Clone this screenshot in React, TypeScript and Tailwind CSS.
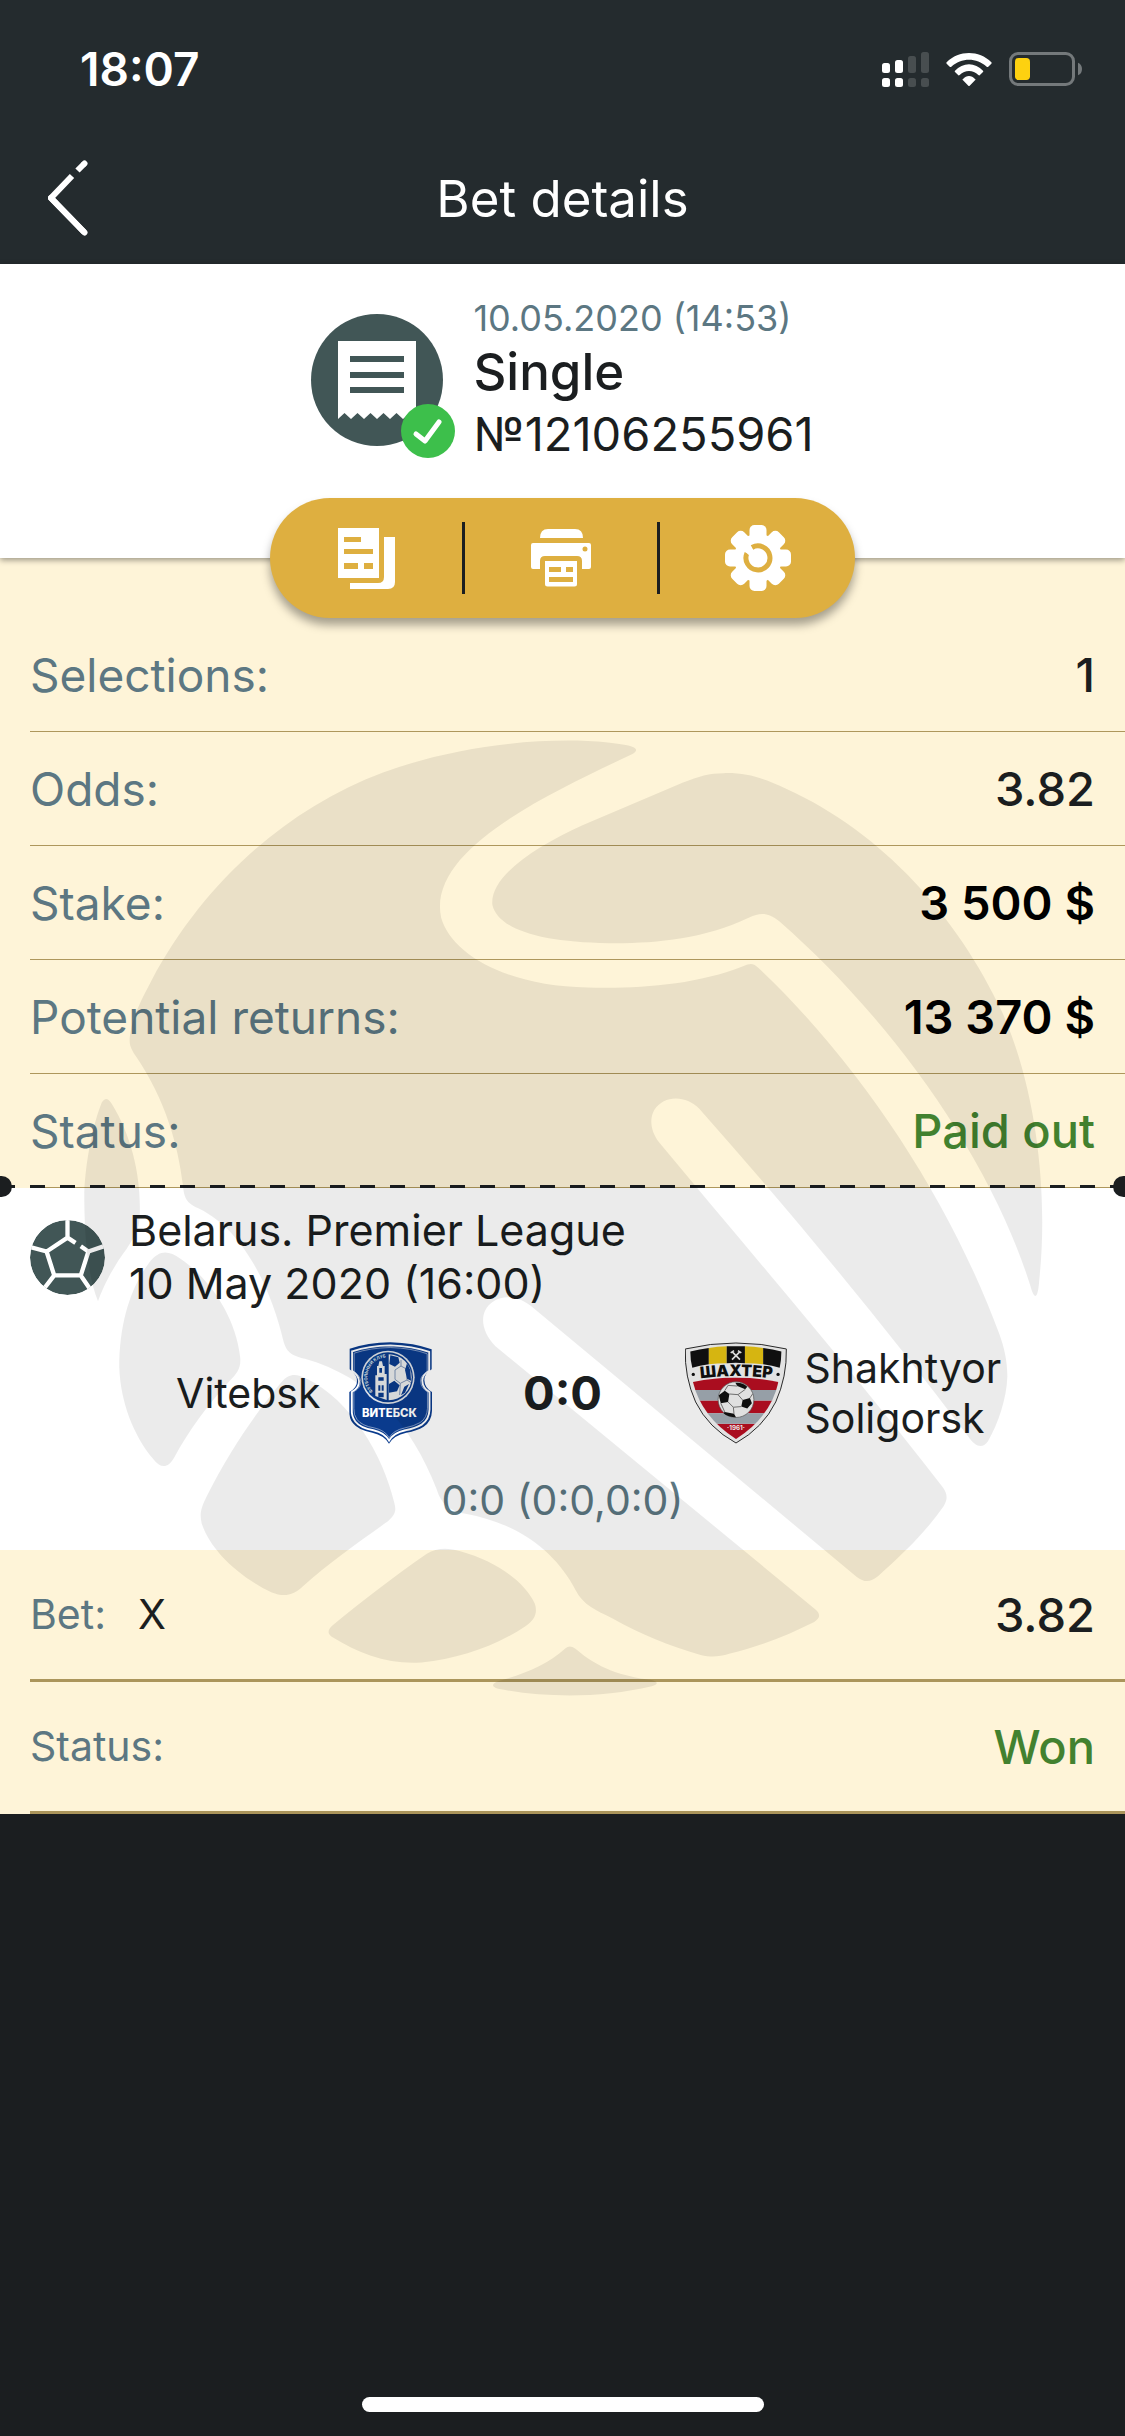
import type { ReactNode } from "react";
import clsx from "clsx";

type Row = {
  label: string;
  value: string;
  valueClass?: string;
};

const summary: Row[] = [
  { label: "Selections:", value: "1", valueClass: "font-medium text-[#1b1e20]" },
  { label: "Odds:", value: "3.82", valueClass: "font-medium text-[#1b1e20]" },
  { label: "Stake:", value: "3 500 $", valueClass: "font-semibold text-black" },
  { label: "Potential returns:", value: "13 370 $", valueClass: "font-semibold text-black" },
  { label: "Status:", value: "Paid out", valueClass: "font-medium text-[#42812f]" },
];

function SignalIcon() {
  return (
    <svg viewBox="0 0 47 35" className="h-[35px] w-[47px]" aria-hidden="true">
      <g fill="#fff">
        <rect x="0" y="11" width="8" height="10" rx="2.5" />
        <rect x="13" y="8" width="8" height="13" rx="2.5" />
        <rect x="0" y="26" width="8" height="9" rx="2.5" />
        <rect x="13" y="26" width="8" height="9" rx="2.5" />
      </g>
      <g fill="#484e50">
        <rect x="26" y="4" width="8" height="17" rx="2.5" />
        <rect x="39" y="0" width="8" height="21" rx="2.5" />
        <rect x="26" y="26" width="8" height="9" rx="2.5" />
        <rect x="39" y="26" width="8" height="9" rx="2.5" />
      </g>
    </svg>
  );
}

function WifiIcon() {
  return (
    <svg viewBox="319 96 136 99" className="h-[33px] w-[46px]" fill="#fff" aria-hidden="true">
      <path d="M320 124C357 87 417 87 454 124Q456 126 454 128L444 138Q442 139 440 137C410 109 364 109 334 137Q332 139 330 138L320 128Q318 126 320 124Z" />
      <path d="M345 149C368 123 406 123 429 149Q431 151 429 153L419 163Q417 164 415 162C399 146 375 146 359 162Q357 164 355 163L345 153Q343 151 345 149Z" />
      <path d="M369 174C379 162 395 162 405 174Q408 176 405 178L389 194Q387 196 385 194L369 178Q366 176 369 174Z" />
    </svg>
  );
}

function BatteryIcon() {
  return (
    <svg viewBox="507 96 219 102" className="h-[34px] w-[73px]" aria-hidden="true">
      <rect x="511.500" y="100.500" width="189" height="93" rx="23" fill="none" stroke="#74797b" strokeWidth="9" />
      <rect x="525" y="114" width="45" height="66" rx="11" fill="#fdd110" />
      <path d="M714 128Q726 133 726 147Q726 161 714 166Z" fill="#74797b" />
    </svg>
  );
}

function ReceiptIcon() {
  return (
    <svg viewBox="0 0 132 132" className="size-[132px]" aria-hidden="true">
      <circle cx="66" cy="66" r="66" fill="#415656" />
      <path
        d="M27 27H105V105L98.500 99L92 105L85.500 99L79 105L72.500 99L66 105L59.500 99L53 105L46.500 99L40 105L33.500 99L27 105Z"
        fill="#fff"
      />
      <path d="M39 45H93M39 61H93M39 76H93" stroke="#415656" strokeWidth="6" />
    </svg>
  );
}

function CopyIcon() {
  return (
    <svg viewBox="0 0 57 61" className="h-[61px] w-[57px]" aria-hidden="true">
      <path
        fill="#fff"
        fillRule="evenodd"
        d="M0 0H41V50H0ZM6 9V14H23V9ZM6 21V26H35V21ZM6 35V41H20V35ZM26 35V41H35V35Z"
      />
      <path fill="#fff" d="M46 9H57V54Q57 61 50 61H12V55H40Q46 55 46 49Z" />
    </svg>
  );
}

function PrintIcon() {
  return (
    <svg viewBox="0 0 60 58" className="h-[58px] w-[60px]" fill="#fff" aria-hidden="true">
      <path d="M9 9Q9 0 17 0H44Q52 0 52 9Z" />
      <path
        fillRule="evenodd"
        d="M2 14H58Q60 14 60 16V38Q60 40 58 40H51V32Q51 27 46 27H14Q9 27 9 32V40H2Q0 40 0 38V16Q0 14 2 14ZM54 17.500A2.500 2.500 0 1 0 54 22.500A2.500 2.500 0 1 0 54 17.500Z"
      />
      <path
        fillRule="evenodd"
        d="M14 32H46V55Q46 57.500 43.500 57.500H16.500Q14 57.500 14 55ZM18 38V43H30V38ZM35 38V43H42V38ZM18 48V53H42V48Z"
      />
    </svg>
  );
}

function GearIcon() {
  return (
    <svg viewBox="-33 -33 66 66" className="size-[66px]" aria-hidden="true">
      <g fill="#fff">
        <circle r="24" />
        {[0, 45, 90, 135].map((angle) => (
          <rect key={angle} x="-8.500" y="-33" width="17" height="66" rx="5" transform={`rotate(${angle})`} />
        ))}
      </g>
      <path d="M-6 -10.500A12 12 0 1 1 -11 -5" fill="none" stroke="#deaf40" strokeWidth="5" />
      <path d="M-13 -9L-5 -2" stroke="#fff" strokeWidth="4" />
    </svg>
  );
}

function BallIcon() {
  return (
    <svg viewBox="90 143 226 226" className="size-[75px] shrink-0" aria-hidden="true">
      <clipPath id="ball">
        <circle cx="203" cy="256" r="113" />
      </clipPath>
      <g clipPath="url(#ball)">
        <circle cx="203" cy="256" r="113" fill="#415656" />
        <path
          d="M227 212L203 196L140 238L163 310H243L266 238L243 222M203 196V135M266 238L325 218M243 310L277 360M163 310L129 354M140 238L82 222"
          fill="none"
          stroke="#fff"
          strokeWidth="13"
        />
      </g>
    </svg>
  );
}

function VitebskCrest() {
  const shield =
    "M86 86Q140 68 208 67Q280 69 332 88V148Q309 162 310 180Q311 204 333 216V272Q332 304 308 320Q288 332 256 338Q218 346 204 371Q190 346 154 338Q112 331 96 310Q84 295 85 272V216Q109 202 108 182Q108 164 86 148Z";
  return (
    <svg viewBox="54 66 306 306" className="size-[102px] shrink-0" role="img" aria-label="FC Vitebsk">
      <path d={shield} fill="#0a3b8d" />
      <path d={shield} fill="none" stroke="#fff" strokeWidth="6" transform="translate(12.500 13) scale(.94)" />
      <path d={shield} fill="none" stroke="#c9d3e4" strokeWidth="2" transform="translate(23 23) scale(.89)" />
      <circle cx="201" cy="172" r="80" fill="#dfe3e8" />
      <circle cx="201" cy="172" r="75" fill="#0a3b8d" />
      <path d="M203 103A69 69 0 0 1 203 241Z" fill="#e9ebec" />
      <g fill="none" stroke="#7e93b5" strokeWidth="3">
        <path d="M222 150L240 138L258 148V180L238 190L222 178ZM238 190L236 225M258 180L270 188M240 138V120" />
      </g>
      <path
        d="M208 106L232 112L236 128L222 140L205 132ZM258 130L268 150L270 182L258 176L252 150ZM204 192L220 182L236 196L228 214L204 218ZM250 200L264 192L252 218L240 226Z"
        fill="#0a3b8d"
      />
      <path d="M175 124H183L186 138H191V162H197V240L163 228V166H168V138H172Z" fill="#e9ebec" />
      <path d="M175 144H183V158H175ZM172 172H188V182H172ZM172 196H178V212H172ZM182 196H188V212H182ZM172 218H188V232H172Z" fill="#0a3b8d" />
      <path id="vitebsk-ring" d="M156 214A60 60 0 0 1 201 112" fill="none" />
      <text className="font-['Inter',sans-serif] font-bold" fontSize="13" fill="#dfe3e8">
        <textPath href="#vitebsk-ring">ФУТБОЛЬНЫЙ КЛУБ</textPath>
      </text>
      <text x="205" y="292" textAnchor="middle" className="font-['Inter',sans-serif] font-extrabold" fontSize="34" fill="#fff">
        ВИТЕБСК
      </text>
    </svg>
  );
}

function ShakhtyorCrest() {
  return (
    <svg viewBox="76 66 308 306" className="size-[102px] shrink-0" role="img" aria-label="FC Shakhtyor Soligorsk">
      <clipPath id="shakhtyor-body">
        <path d="M100 186Q230 158 358 186Q336 290 230 358Q126 292 100 186Z" />
      </clipPath>
      <path
        d="M77 86Q230 50 382 86Q384 170 350 246Q312 324 230 370Q146 324 108 246Q74 170 77 86Z"
        fill="#f6f6f6"
        stroke="#2b2b2b"
        strokeWidth="3"
      />
      <path d="M92 94Q120 86 148 83V132Q120 136 98 143Q92 120 92 94Z" fill="#111" />
      <path d="M148 83Q174 79 202 78V129Q174 129 148 132Z" fill="#e9c513" />
      <path d="M202 78Q230 77 257 78V129Q230 127 202 129Z" fill="#111" />
      <path d="M257 78Q284 79 312 83V132Q284 129 257 129Z" fill="#e9c513" />
      <path d="M312 83Q342 86 367 94Q367 120 362 143Q340 136 312 132Z" fill="#111" />
      <path d="M218 94L242 118M242 94L218 118M214 98L224 91M246 98L236 91" stroke="#eee" strokeWidth="5" />
      <circle cx="101" cy="163" r="5" fill="#111" />
      <circle cx="357" cy="163" r="5" fill="#111" />
      <path id="shakhtyor-name" d="M106 177Q230 159 356 177" fill="none" />
      <text className="font-['Inter',sans-serif] font-black" fontSize="48" fill="#111" textAnchor="middle">
        <textPath href="#shakhtyor-name" startOffset="50%">
          ШАХТЕР
        </textPath>
      </text>
      <g clipPath="url(#shakhtyor-body)">
        <path d="M90 160H370V210H90ZM90 242H370V280H90ZM90 312H370V370H90Z" fill="#b90f22" />
        <path d="M90 210H370V242H90ZM90 280H370V312H90Z" fill="#a3adb6" />
      </g>
      <circle cx="230" cy="239" r="54" fill="#f3f3f3" stroke="#555" strokeWidth="2" />
      <path
        d="M228 188Q250 186 264 200L258 208L234 198ZM178 226L196 212L210 222L206 246L184 250ZM250 240L272 234L278 250L264 266L246 260ZM196 276L224 282L230 292Q206 292 192 280Z"
        fill="#111"
      />
      <path
        d="M196 212L206 196L234 198M210 222L236 224L258 208M236 224L250 240M206 246L222 262L246 260M222 262L224 282M184 250L196 276M272 234L280 222"
        fill="none"
        stroke="#777"
        strokeWidth="3"
      />
      <text x="230" y="331" textAnchor="middle" className="font-['Inter',sans-serif] font-bold" fontSize="19" fill="#fff">
        ·1961·
      </text>
    </svg>
  );
}

// Club emblem laid over the whole slip
function Watermark() {
  return (
    <div className="pointer-events-none absolute inset-x-0 top-[172px] flex justify-center">
      <svg viewBox="4 0 1568 1568" className="size-[980px] shrink-0" fill="#000" fillOpacity="0.08" aria-hidden="true">
        <path d="M900 38C915 28 895 24 860 20C760 10 620 24 500 68C340 128 210 250 130 400C112 434 98 462 95 490C93 505 98 512 106 524C150 590 172 660 180 730C182 752 188 758 206 766C280 802 322 900 340 975C345 995 352 1000 375 1006C480 1036 545 1110 586 1215C594 1240 606 1248 632 1254C720 1270 778 1318 808 1376C820 1400 840 1408 868 1422C910 1446 960 1466 1008 1480C1025 1484 1038 1483 1054 1478C1104 1466 1148 1448 1190 1427C1200 1421 1200 1414 1192 1407L680 986C662 968 656 946 663 930C675 904 712 898 742 926L1258 1355C1270 1364 1280 1364 1292 1354C1332 1318 1368 1284 1397 1242C1404 1231 1403 1222 1396 1212C1260 1036 1100 850 942 660C928 642 926 622 934 608C950 584 984 584 1006 606C1160 780 1300 950 1436 1130C1448 1148 1460 1150 1468 1138C1484 1110 1498 1070 1499 1034C1499 1010 1494 988 1486 966C1410 760 1270 540 1100 380C1092 373 1088 373 1076 378C1000 408 910 414 828 412C700 410 610 360 593 300C570 190 770 100 900 38Z" />
        <path d="M1045 69C1085 68 1110 78 1145 94C1300 164 1420 300 1490 450C1545 572 1565 740 1550 880C1548 912 1542 912 1536 890C1470 680 1310 460 1134 306C1116 292 1104 292 1086 300C1010 336 930 342 860 341C750 340 684 318 675 280C670 236 740 188 820 152L980 84C1005 74 1022 69 1045 69Z" />
        <path d="M50 596C55 588 60 588 66 598C98 650 112 712 111 770C111 800 104 808 90 830C66 862 52 892 44 914C26 870 22 800 22 740C24 690 36 630 50 596Z" />
        <path d="M126 852C142 832 156 832 176 846C226 880 264 942 271 1000C274 1018 268 1028 256 1040C218 1082 190 1120 166 1164C156 1182 144 1182 132 1166C100 1128 80 1074 78 1020C78 950 96 892 126 852Z" />
        <path d="M337 1044C350 1028 362 1030 378 1038C448 1072 500 1160 518 1236C522 1250 519 1256 508 1266C460 1300 412 1334 372 1370C358 1384 342 1388 322 1380C268 1354 224 1312 210 1270C206 1254 209 1244 218 1226C254 1154 294 1096 337 1044Z" />
        <path d="M570 1318C586 1308 604 1308 624 1314C682 1330 728 1364 743 1398C748 1414 742 1424 728 1434C680 1466 622 1486 562 1492C510 1496 462 1478 420 1452C410 1446 411 1440 420 1432C466 1394 518 1354 570 1318Z" />
        <path d="M792 1469Q799 1463 808 1470C845 1502 882 1514 930 1520Q946 1525 930 1530C850 1549 760 1549 684 1534Q668 1529 684 1522C726 1510 762 1496 792 1469Z" />
      </svg>
    </div>
  );
}

function ActionButton({ label, children }: { label: string; children: ReactNode }) {
  return (
    <button
      type="button"
      aria-label={label}
      className="flex h-[72px] w-[195px] items-center justify-center border-r-3 border-[#1b1e20] last:border-r-0"
    >
      {children}
    </button>
  );
}

export default function App() {
  return (
    <div className="flex min-h-screen flex-col bg-[#1b1e20] font-['Inter',sans-serif] text-[#1b1e20]">
      <header className="bg-[#242b2e] text-white">
        <div className="flex h-[132px] items-center justify-between pt-1.5 pr-[43px] pl-20">
          <span className="text-[46px] leading-none font-semibold">18:07</span>
          <div className="flex items-center gap-[17px]">
            <SignalIcon />
            <WifiIcon />
            <BatteryIcon />
          </div>
        </div>
        <div className="grid h-[132px] grid-cols-[1fr_auto_1fr] items-center px-12">
          <button type="button" aria-label="Back" className="w-10">
            <svg viewBox="0 0 40 76" className="h-[76px] w-10" fill="none" stroke="#fff" strokeWidth="6">
              <path d="M24 16L3 38L36.500 72.500" />
              <path d="M3 38L36.500 72.500M36 4L36.500 3.500" strokeLinecap="round" />
              <path d="M36.500 3.500L29.500 10.500" />
            </svg>
          </button>
          <h1 className="text-[51px] leading-none">Bet details</h1>
        </div>
      </header>

      <main>
        <section className="relative z-10 flex flex-col items-center bg-white pt-[30px] shadow-[0_2px_6px_rgba(0,0,0,0.4)]">
          <div className="flex items-center gap-[30px]">
            <div className="relative">
              <ReceiptIcon />
              <svg viewBox="0 0 54 54" className="absolute -right-3 -bottom-3 size-[54px]" aria-hidden="true">
                <circle cx="27" cy="27" r="27" fill="#3dbf4b" />
                <path d="M15 30L24 37L38 18" fill="none" stroke="#fff" strokeWidth="5" strokeLinecap="round" strokeLinejoin="round" />
              </svg>
            </div>
            <div>
              <p className="text-[36px] leading-[48px] text-[#5c7782]">10.05.2020 (14:53)</p>
              <p className="text-[51px] leading-[60px] font-medium">Single</p>
              <p className="text-[47px] leading-[64px]">№12106255961</p>
            </div>
          </div>
          <div className="mt-8 -mb-15 flex h-[120px] items-center rounded-full bg-[#deaf40] shadow-[0_7px_10px_rgba(0,0,0,0.35)]">
            <ActionButton label="Copy slip">
              <CopyIcon />
            </ActionButton>
            <ActionButton label="Print slip">
              <PrintIcon />
            </ActionButton>
            <ActionButton label="Settings">
              <GearIcon />
            </ActionButton>
          </div>
        </section>

        <div className="relative bg-[#fef4d8]">
          <dl className="pt-15 pl-[30px]">
            {summary.map((row) => (
              <div
                key={row.label}
                className="flex h-[114px] items-center justify-between border-b border-[#ae975c] pr-[30px] text-[46px] leading-none"
              >
                <dt className="text-[#5c7782]">{row.label}</dt>
                <dd className={clsx("text-[47px]", row.valueClass)}>{row.value}</dd>
              </div>
            ))}
          </dl>

          <section className="relative bg-white pt-4 pb-[26px]">
            <div className="absolute inset-x-0 -top-[3px] h-[3px] bg-[repeating-linear-gradient(90deg,#1b1e20_0_15px,transparent_15px_30px)]" />
            <div className="absolute -top-3 left-0 h-[21px] w-3 rounded-r-full bg-[#1b1e20]" />
            <div className="absolute -top-3 right-0 h-[21px] w-3 rounded-l-full bg-[#1b1e20]" />

            <div className="flex items-center gap-6 px-[30px]">
              <BallIcon />
              <div className="text-[43px] leading-[53px]">
                <h2>Belarus. Premier League</h2>
                <p>10 May 2020 (16:00)</p>
              </div>
            </div>

            <div className="mt-8 grid grid-cols-[1fr_244px_1fr] items-center text-[41px] leading-[50px]">
              <div className="flex items-center justify-end gap-[18px]">
                <span>Vitebsk</span>
                <VitebskCrest />
              </div>
              <span className="text-center text-[47px] font-bold">0:0</span>
              <div className="flex items-center gap-[18px]">
                <ShakhtyorCrest />
                <span>
                  Shakhtyor
                  <br />
                  Soligorsk
                </span>
              </div>
            </div>

            <p className="mt-8 text-center text-[41px] leading-[48px] text-[#5c7782]">0:0 (0:0,0:0)</p>
          </section>

          <dl className="pl-[30px] text-[41px] leading-none">
            <div className="flex h-[132px] items-center border-b-3 border-[#ab955b] pr-[30px]">
              <dt className="text-[#5c7782]">Bet:</dt>
              <dd className="ml-8 flex-1">X</dd>
              <dd className="text-[47px] font-medium">3.82</dd>
            </div>
            <div className="flex h-[132px] items-center justify-between border-b-3 border-[#ab955b] pr-[30px]">
              <dt className="text-[#5c7782]">Status:</dt>
              <dd className="text-[47px] font-medium text-[#42812f]">Won</dd>
            </div>
          </dl>

          <Watermark />
        </div>
      </main>

      <div className="mx-auto mt-auto mb-6 h-[15px] w-[402px] rounded-full bg-white" />
    </div>
  );
}
